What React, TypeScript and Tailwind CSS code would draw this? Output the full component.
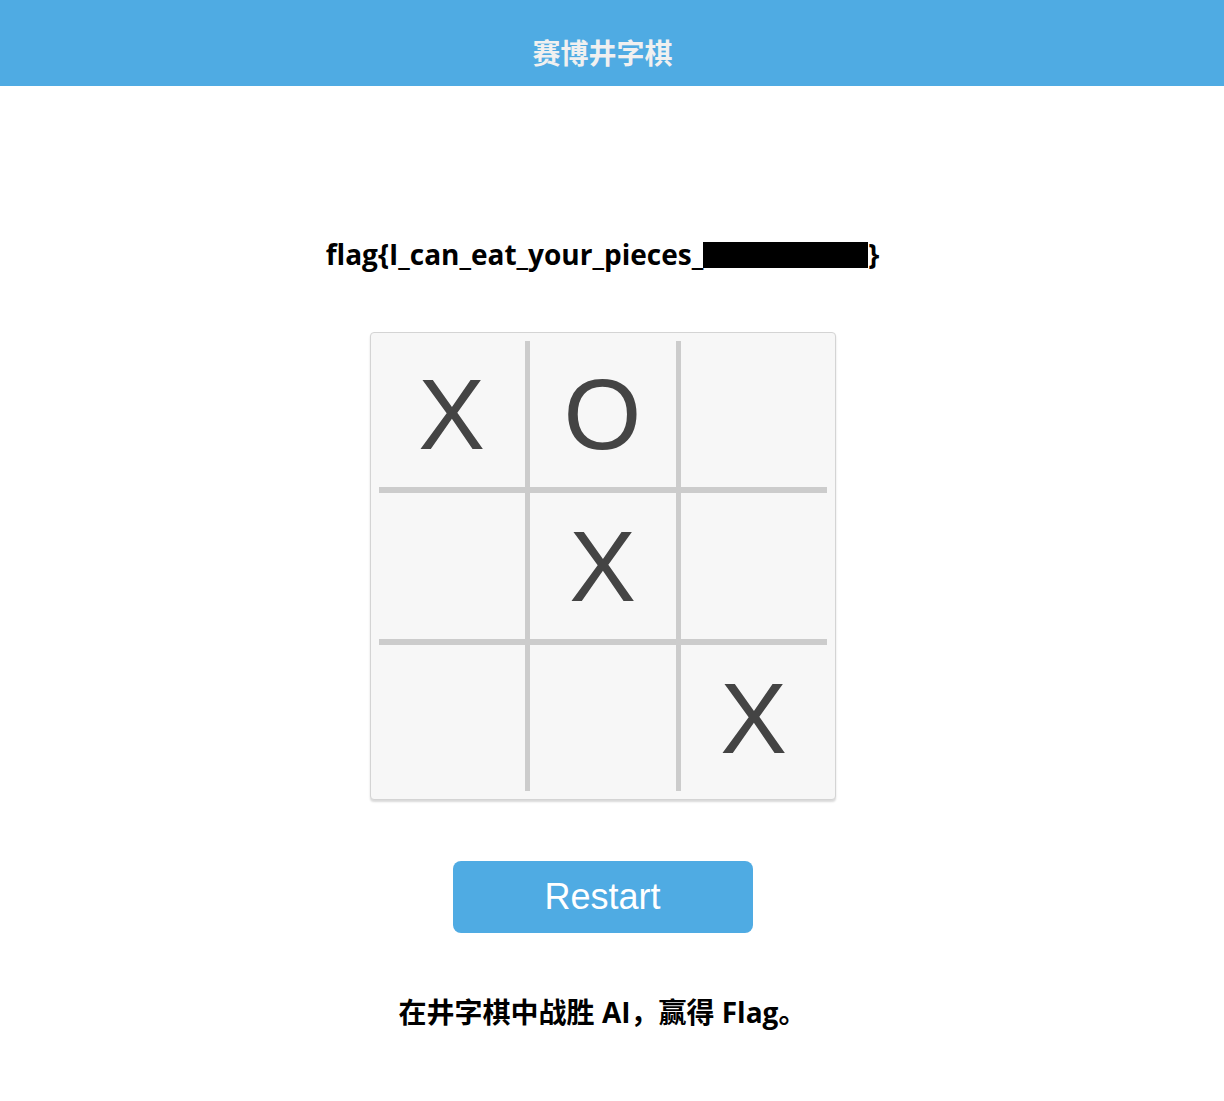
const BOARD = ["X", "O", "", "", "X", "", "", "", "X"];

const App = () => {
  return (
    <div className="min-h-[1101px] bg-white">
      <header className="h-[86px] bg-[#4fabe3]">
        <div className="w-[1205px] flex justify-center pt-[35px]">
          <h1 className="text-[28px] leading-[34px] font-bold text-[#f0f0f0] font-['Noto_Sans_CJK_SC',sans-serif]">
            赛博井字棋
          </h1>
        </div>
      </header>

      <div className="w-[1205px] flex flex-col items-center">
        <p className="mt-[150px] h-[36px] text-[28px] leading-[36px] font-bold text-black font-['Open_Sans','Noto_Sans_CJK_SC',sans-serif] flex items-center">
          flag{"{"}I_can_eat_your_pieces_
          <span className="inline-block w-[165px] h-[26px] bg-black mt-[2px]" />
          {"}"}
        </p>

        <div className="mt-[60px] p-2 bg-[#f7f7f7] border border-[#d4d4d4] rounded-[4px] shadow-[0_2px_2px_rgba(0,0,0,0.15)]">
          <div className="grid grid-cols-[146px_146px_146px] grid-rows-[146px_146px_146px] gap-x-[5px] gap-y-[6px] bg-[#cccccc]">
            {BOARD.map((cell, i) => (
              <div
                key={i}
                className="bg-[#f7f7f7] flex items-center justify-center text-[100px] leading-none text-[#444444] font-['Liberation_Sans',Arial,sans-serif]"
              >
                {cell}
              </div>
            ))}
          </div>
        </div>

        <button
          type="button"
          className="mt-[61px] w-[300px] h-[72px] rounded-[8px] bg-[#4fabe3] text-white text-[36px] font-['Liberation_Sans',Arial,sans-serif]"
        >
          Restart
        </button>

        <p className="mt-[60px] text-[28px] leading-[38px] font-bold text-black font-['Open_Sans','Noto_Sans_CJK_SC',sans-serif]">
          在井字棋中战胜 AI，赢得 Flag。
        </p>
      </div>
    </div>
  );
};

export default App;
